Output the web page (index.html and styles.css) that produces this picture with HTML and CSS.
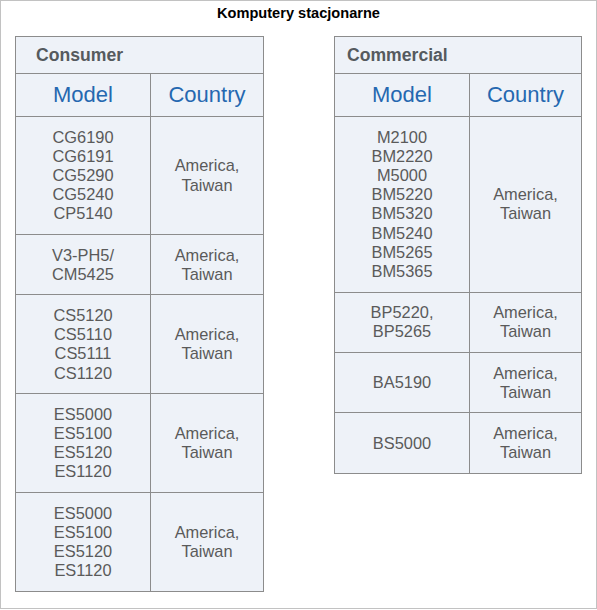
FILE: index.html
```html
<!DOCTYPE html>
<html lang="pl">
<head>
<meta charset="utf-8">
<title>Komputery stacjonarne</title>
<link rel="stylesheet" href="styles.css">
</head>
<body>
<div class="frame">
  <div class="title">Komputery stacjonarne</div>
  <div class="tables">
    <table class="grid">
      <colgroup><col class="c1"><col class="c2"></colgroup>
      <tr><th class="group" colspan="2">Consumer</th></tr>
      <tr><th class="head">Model</th><th class="head">Country</th></tr>
      <tr><td>CG6190<br>CG6191<br>CG5290<br>CG5240<br>CP5140</td><td>America,<br>Taiwan</td></tr>
      <tr><td>V3-PH5/<br>CM5425</td><td>America,<br>Taiwan</td></tr>
      <tr><td>CS5120<br>CS5110<br>CS5111<br>CS1120</td><td>America,<br>Taiwan</td></tr>
      <tr><td>ES5000<br>ES5100<br>ES5120<br>ES1120</td><td>America,<br>Taiwan</td></tr>
      <tr><td>ES5000<br>ES5100<br>ES5120<br>ES1120</td><td>America,<br>Taiwan</td></tr>
    </table>
    <table class="grid grid-commercial">
      <colgroup><col class="c1"><col class="c2"></colgroup>
      <tr><th class="group" colspan="2">Commercial</th></tr>
      <tr><th class="head">Model</th><th class="head">Country</th></tr>
      <tr><td>M2100<br>BM2220<br>M5000<br>BM5220<br>BM5320<br>BM5240<br>BM5265<br>BM5365</td><td>America,<br>Taiwan</td></tr>
      <tr><td>BP5220,<br>BP5265</td><td>America,<br>Taiwan</td></tr>
      <tr><td>BA5190</td><td>America,<br>Taiwan</td></tr>
      <tr><td>BS5000</td><td>America,<br>Taiwan</td></tr>
    </table>
  </div>
</div>
</body>
</html>
```
FILE: styles.css
```css
html, body {
  margin: 0;
  padding: 0;
  background: #ffffff;
}
body {
  font-family: "Liberation Sans", Arial, sans-serif;
}
.frame {
  box-sizing: border-box;
  width: 597px;
  height: 609px;
  border: 1px solid #c2c2c2;
}
.title {
  height: 25px;
  line-height: 25px;
  text-align: center;
  font-weight: bold;
  font-size: 14.6px;
  color: #000;
}
.tables {
  display: flex;
  align-items: flex-start;
  gap: 70px;
  padding: 10px 0 0 14px;
}
.grid {
  border-collapse: collapse;
  table-layout: fixed;
  width: 248px;
  background: #eef2f8;
  border: 1px solid #8c8c8c;
}
.grid .c1 { width: 135px; }
.grid .c2 { width: 113px; }
.grid-commercial { width: 247px; }
.grid-commercial .c2 { width: 112px; }
.grid th, .grid td {
  border: 1px solid #8c8c8c;
  padding: 0;
}
.group {
  height: 36px;
  text-align: left;
  padding-left: 20px !important;
  font-size: 17.6px;
  font-weight: bold;
  color: #555a5e;
}
.grid-commercial .group {
  padding-left: 12px !important;
}
.head {
  height: 42px;
  font-weight: normal;
  font-size: 22px;
  color: #2568b0;
  text-align: center;
}
.grid td {
  padding: 10.5px 4px !important;
  text-align: center;
  vertical-align: middle;
  font-size: 16.4px;
  line-height: 19.2px;
  color: #5a5a5a;
}
```
